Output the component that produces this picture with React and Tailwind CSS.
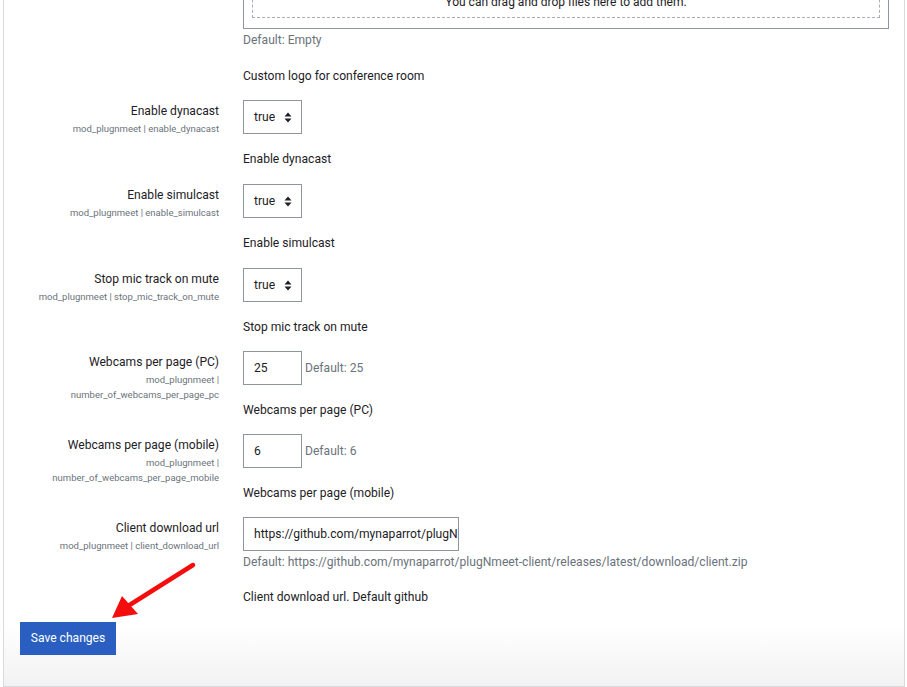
const font = { fontFamily: 'Roboto, "Liberation Sans", sans-serif' }

function Select() {
  return (
    <div className="flex h-[34px] w-[59px] items-center justify-between border border-[#8f959e] bg-white pl-[10px] pr-[9px] text-[12.1px] text-[#1d2125]">
      <span>true</span>
      <svg width="8" height="11" viewBox="0 0 8 11" fill="#1d2125">
        <path d="M4 0.5 L7.5 4.5 H0.5 Z" />
        <path d="M4 10.5 L7.5 6.5 H0.5 Z" />
      </svg>
    </div>
  )
}

function NumberInput({ value, def }) {
  return (
    <div className="flex items-center gap-[3px]">
      <div className="flex h-[34px] w-[59px] items-center border border-[#8f959e] bg-white pl-[10px] text-[12.1px] text-[#1d2125]">
        {value}
      </div>
      <span className="text-[12.1px] text-[#6a737b]">Default: {def}</span>
    </div>
  )
}

function Setting({ label, sub, control, desc, extra }) {
  return (
    <div className="grid grid-cols-[215px_1fr] gap-x-[24px]">
      <div className="pt-[2px] text-right">
        <div className="text-[12.1px] leading-[19px] text-[#1d2125]">{label}</div>
        <div className="text-[9.5px] leading-[15px] text-[#6a737b]">
          {sub.map((s) => (
            <div key={s}>{s}</div>
          ))}
        </div>
      </div>
      <div>
        {control}
        {extra}
        <div className="mt-[15px] text-[12.1px] leading-[20px] text-[#1d2125]">{desc}</div>
      </div>
    </div>
  )
}

export default function App() {
  return (
    <div className="relative h-[687px] w-[907px] overflow-hidden bg-white" style={font}>
      <div className="ml-[3px] flex h-[687px] w-[902px] flex-col border-x border-b border-[#d9dcdf] bg-gradient-to-b from-white from-[91%] to-[#f2f2f2]">
        <div className="mt-[-41px] pr-[15px]">
          {/* file drop area, scrolled mostly out of view */}
          <div className="grid grid-cols-[215px_1fr] gap-x-[24px]">
            <div />
            <div>
              <div className="h-[70px] border border-[#8f959e] px-[8px] pb-[10px] pt-[8px]">
                <div className="flex h-full items-end justify-center border border-dashed border-[#a9aeb4] pb-[6px] text-[12px] text-[#1d2125]">
                  You can drag and drop files here to add them.
                </div>
              </div>
              <div className="mt-[1px] text-[12.1px] leading-[20px] text-[#6a737b]">Default: Empty</div>
              <div className="mt-[16px] text-[12.1px] leading-[20px] text-[#1d2125]">Custom logo for conference room</div>
            </div>
          </div>

          <div className="mt-[14px] flex flex-col gap-[15px]">
            <Setting
              label="Enable dynacast"
              sub={['mod_plugnmeet | enable_dynacast']}
              control={<Select />}
              desc="Enable dynacast"
            />
            <Setting
              label="Enable simulcast"
              sub={['mod_plugnmeet | enable_simulcast']}
              control={<Select />}
              desc="Enable simulcast"
            />
            <Setting
              label="Stop mic track on mute"
              sub={['mod_plugnmeet | stop_mic_track_on_mute']}
              control={<Select />}
              desc="Stop mic track on mute"
            />
            <div className="mt-[-1px]">
              <Setting
                label="Webcams per page (PC)"
                sub={['mod_plugnmeet |', 'number_of_webcams_per_page_pc']}
                control={<NumberInput value="25" def="25" />}
                desc="Webcams per page (PC)"
              />
            </div>
            <div className="mt-[-1px]">
              <Setting
                label="Webcams per page (mobile)"
                sub={['mod_plugnmeet |', 'number_of_webcams_per_page_mobile']}
                control={<NumberInput value="6" def="6" />}
                desc="Webcams per page (mobile)"
              />
            </div>
            <div className="mt-[-1px]">
              <Setting
                label="Client download url"
                sub={['mod_plugnmeet | client_download_url']}
                control={
                  <div className="flex h-[34px] w-[216px] items-center overflow-hidden whitespace-nowrap border border-[#8f959e] bg-white pl-[10px] text-[12.1px] text-[#1d2125]">
                    https://github.com/mynaparrot/plugNmeet-client/releases/latest/download/client.zip
                  </div>
                }
                extra={
                  <div className="mt-[1px] text-[12.1px] leading-[20px] text-[#6a737b]">
                    Default: https://github.com/mynaparrot/plugNmeet-client/releases/latest/download/client.zip
                  </div>
                }
                desc="Client download url. Default github"
              />
            </div>
          </div>

          <div className="mt-[15px] pl-[16px]">
            <button className="h-[33px] w-[96px] bg-[#2a5fc1] text-[12.1px] text-white">Save changes</button>
          </div>
        </div>
      </div>

      {/* red annotation arrow */}
      <svg className="pointer-events-none absolute left-0 top-0" width="907" height="687">
        <line x1="193" y1="565" x2="128" y2="606" stroke="#f40d0d" strokeWidth="4.5" strokeLinecap="round" />
        <polygon points="112,618 122,596 138,614" fill="#f40d0d" />
      </svg>
    </div>
  )
}
